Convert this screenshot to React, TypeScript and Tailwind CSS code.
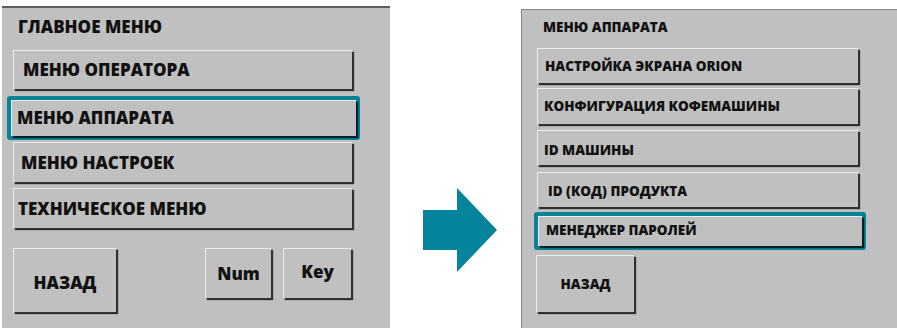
import React from "react";

const Btn = ({ children, className = "" }: { children: React.ReactNode; className?: string }) => (
    <div className={"flex items-center bg-[#c0c0c0] border-t border-l border-[#ececec] shadow-[2px_2px_1px_rgba(0,0,0,0.75)] font-extrabold text-[#111] " + className}>
        {children}
    </div>
)

const Arrow = () => (
    <svg width="76" height="84" viewBox="0 0 76 84">
        <polygon points="0,22 34,22 34,0 74,42 34,84 34,62 0,62" fill="#05849b" />
    </svg>
)

export default function App() {
    return (
        <div className="flex w-[897px] h-[328px] bg-white overflow-hidden" style={{ fontFamily: '"Open Sans", "Noto Sans", sans-serif' }}>
            {/* главное меню */}
            <div className="ml-[2px] mt-[6px] w-[388px] h-[322px] bg-[#c0c0c0] border-t-2 border-[#5f5f5f] flex flex-col">
                <div className="pl-[16px] pt-[9px] h-[42px] text-[17px] font-extrabold leading-[20px] text-[#111]">ГЛАВНОЕ МЕНЮ</div>
                <Btn className="ml-[11px] w-[339px] h-[39px] pl-[9px] text-[17px]">МЕНЮ ОПЕРАТОРА</Btn>
                <div className="ml-[5px] mt-[7px] w-[353px] h-[44px] rounded-[3px] border-4 border-[#0a8296]">
                    <Btn className="w-full h-full pl-[5px] pb-[2px] text-[17px] shadow-[2px_2px_1px_rgba(0,0,0,0.5)]">МЕНЮ АППАРАТА</Btn>
                </div>
                <Btn className="ml-[11px] mt-[2px] w-[339px] h-[40px] pl-[7px] text-[17px]">МЕНЮ НАСТРОЕК</Btn>
                <Btn className="ml-[11px] mt-[6px] w-[339px] h-[40px] pl-[4px] text-[17px]">ТЕХНИЧЕСКОЕ МЕНЮ</Btn>
                <div className="flex mt-[20px] ml-[11px]">
                    <Btn className="w-[103px] h-[64px] justify-center pt-[4px] text-[17px]">НАЗАД</Btn>
                    <Btn className="ml-[89px] w-[66px] h-[50px] justify-center text-[17px]">Num</Btn>
                    <Btn className="ml-[12px] w-[68px] h-[50px] justify-center pb-[4px] text-[17px]">Key</Btn>
                </div>
            </div>

            <div className="w-[131px] flex items-start pt-[188px] pl-[33px]">
                <Arrow />
            </div>

            {/* меню аппарата */}
            <div className="mt-[9px] w-[376px] h-[319px] bg-[#c0c0c0] border-t border-l border-[#8a8a8a] flex flex-col">
                <div className="pl-[21px] pt-[8px] h-[38px] text-[13.5px] font-extrabold leading-[18px] text-[#111]">МЕНЮ АППАРАТА</div>
                <Btn className="ml-[15px] w-[321px] h-[35px] pl-[7px] text-[13.5px]">НАСТРОЙКА ЭКРАНА ORION</Btn>
                <Btn className="ml-[15px] mt-[5px] w-[321px] h-[36px] pl-[6px] text-[13.5px]">КОНФИГУРАЦИЯ КОФЕМАШИНЫ</Btn>
                <Btn className="ml-[15px] mt-[6px] w-[321px] h-[35px] pl-[6px] pt-[4px] text-[13.5px]">ID МАШИНЫ</Btn>
                <Btn className="ml-[15px] mt-[7px] w-[321px] h-[35px] pl-[10px] pt-[2px] text-[13.5px]">ID (КОД) ПРОДУКТА</Btn>
                <div className="ml-[12px] mt-[5px] w-[332px] h-[38px] rounded-[3px] border-4 border-[#0a8296]">
                    <Btn className="w-full h-full pl-[7px] pb-[3px] text-[13.5px] shadow-[2px_2px_1px_rgba(0,0,0,0.5)]">МЕНЕДЖЕР ПАРОЛЕЙ</Btn>
                </div>
                <Btn className="ml-[14px] mt-[5px] w-[98px] h-[57px] justify-center text-[13.5px]">НАЗАД</Btn>
            </div>
        </div>
    )
}
